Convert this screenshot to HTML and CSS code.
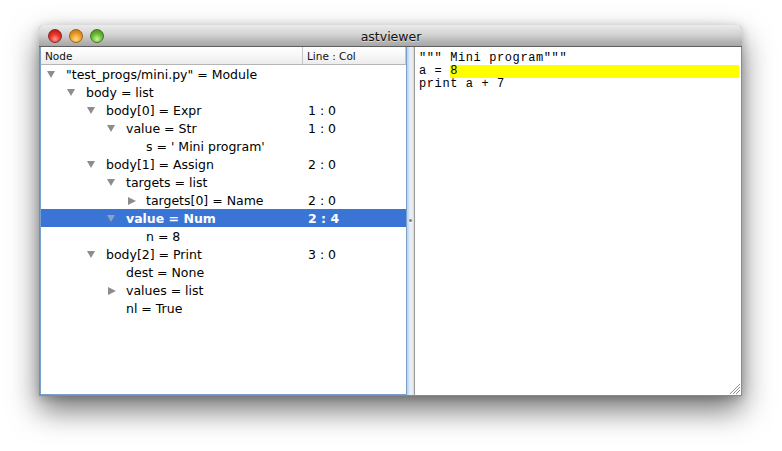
FILE: index.html
```html
<!DOCTYPE html>
<html>
<head>
<meta charset="utf-8">
<title>astviewer</title>
<link rel="stylesheet" href="styles.css">
</head>
<body>
<div class="desk">
  <div class="window">
    <div class="titlebar">
      <div class="lights">
        <span class="light red"></span>
        <span class="light orange"></span>
        <span class="light green"></span>
      </div>
      <div class="title">astviewer</div>
    </div>
    <div class="content">
      <div class="tree-pane">
        <div class="tree-header">
          <div class="hcell hnode">Node</div>
          <div class="hcell hline">Line : Col</div>
        </div>
        <div class="tree-body">
          <div class="row"><div class="node l0"><span class="tog"><i class="tri-down"></i></span><span class="label">"test_progs/mini.py" = Module</span></div><div class="pos"></div></div>
          <div class="row"><div class="node l1"><span class="tog"><i class="tri-down"></i></span><span class="label">body = list</span></div><div class="pos"></div></div>
          <div class="row"><div class="node l2"><span class="tog"><i class="tri-down"></i></span><span class="label">body[0] = Expr</span></div><div class="pos">1 : 0</div></div>
          <div class="row"><div class="node l3"><span class="tog"><i class="tri-down"></i></span><span class="label">value = Str</span></div><div class="pos">1 : 0</div></div>
          <div class="row"><div class="node l4"><span class="tog"></span><span class="label">s = ' Mini program'</span></div><div class="pos"></div></div>
          <div class="row"><div class="node l2"><span class="tog"><i class="tri-down"></i></span><span class="label">body[1] = Assign</span></div><div class="pos">2 : 0</div></div>
          <div class="row"><div class="node l3"><span class="tog"><i class="tri-down"></i></span><span class="label">targets = list</span></div><div class="pos"></div></div>
          <div class="row"><div class="node l4"><span class="tog"><i class="tri-right"></i></span><span class="label">targets[0] = Name</span></div><div class="pos">2 : 0</div></div>
          <div class="row selected"><div class="node l3"><span class="tog"><i class="tri-down"></i></span><span class="label">value = Num</span></div><div class="pos">2 : 4</div></div>
          <div class="row"><div class="node l4"><span class="tog"></span><span class="label">n = 8</span></div><div class="pos"></div></div>
          <div class="row"><div class="node l2"><span class="tog"><i class="tri-down"></i></span><span class="label">body[2] = Print</span></div><div class="pos">3 : 0</div></div>
          <div class="row"><div class="node l3"><span class="tog"></span><span class="label">dest = None</span></div><div class="pos"></div></div>
          <div class="row"><div class="node l3"><span class="tog"><i class="tri-right"></i></span><span class="label">values = list</span></div><div class="pos"></div></div>
          <div class="row"><div class="node l3"><span class="tog"></span><span class="label">nl = True</span></div><div class="pos"></div></div>
        </div>
      </div>
      <div class="splitter"><span class="grip"></span></div>
      <div class="code-pane">
        <div class="code-line">""" Mini program"""</div>
        <div class="code-line">a = <span class="hl">8</span></div>
        <div class="code-line">print a + 7</div>
      </div>
    </div>
    <svg class="resize-grip" width="11" height="11" viewBox="0 0 11 11">
      <line x1="1" y1="11" x2="11" y2="1" stroke="#8e8e8e" stroke-width="1"/>
      <line x1="2" y1="11" x2="11" y2="2" stroke="#ffffff" stroke-width="1"/>
      <line x1="4" y1="11" x2="11" y2="4" stroke="#8e8e8e" stroke-width="1"/>
      <line x1="5" y1="11" x2="11" y2="5" stroke="#ffffff" stroke-width="1"/>
      <line x1="7" y1="11" x2="11" y2="7" stroke="#8e8e8e" stroke-width="1"/>
      <line x1="8" y1="11" x2="11" y2="8" stroke="#ffffff" stroke-width="1"/>
    </svg>
  </div>
</div>
</body>
</html>
```

FILE: styles.css
```css
html, body {
  margin: 0;
  padding: 0;
  background: #ffffff;
}

.desk {
  width: 782px;
  height: 451px;
  box-sizing: border-box;
  padding: 25px 0 0 39px;
  font-family: "DejaVu Sans", "Liberation Sans", sans-serif;
}

.window {
  position: relative;
  width: 703px;
  height: 371px;
  box-sizing: border-box;
  border: 1px solid #8a8a8a;
  border-top: none;
  border-radius: 5px 5px 0 0;
  display: flex;
  flex-direction: column;
  background: #ffffff;
  box-shadow: 0 14px 30px rgba(0, 0, 0, 0.55), 0 2px 10px rgba(0, 0, 0, 0.2);
}

.titlebar {
  height: 21px;
  flex: none;
  border-bottom: 1px solid #5f5f5f;
  border-radius: 5px 5px 0 0;
  margin: 0 -1px;
  background: linear-gradient(#ebebeb, #d3d3d3 45%, #b4b4b4 80%, #a7a7a7);
  display: flex;
  align-items: center;
  position: relative;
}

.lights {
  display: flex;
  gap: 7px;
  padding-left: 9px;
}

.light {
  width: 14px;
  height: 14px;
  border-radius: 50%;
  box-sizing: border-box;
  display: block;
}

.red {
  background: radial-gradient(circle at 50% 75%, #ff9a8a 0%, #e8352b 45%, #a9120c 100%);
  border: 1px solid #8c2a22;
}

.orange {
  background: radial-gradient(circle at 50% 75%, #ffe08a 0%, #f0a02a 45%, #b86a0a 100%);
  border: 1px solid #9a6516;
}

.green {
  background: radial-gradient(circle at 50% 75%, #cdf59a 0%, #6fbe3a 45%, #3b7f14 100%);
  border: 1px solid #3f7a22;
}

.title {
  flex: 1;
  text-align: center;
  font-size: 12.5px;
  color: #111;
  text-shadow: 0 1px 0 rgba(255, 255, 255, 0.5);
  margin-left: -64px;
  padding-top: 1px;
}

.content {
  flex: 1;
  display: flex;
  min-height: 0;
}

.tree-pane {
  width: 367px;
  flex: none;
  box-sizing: border-box;
  border: 1px solid #7a9fcb;
  border-top: none;
  display: flex;
  flex-direction: column;
  font-size: 12.5px;
  color: #000;
}

.tree-header {
  height: 17px;
  flex: none;
  border-bottom: 1px solid #b5b5b5;
  background: linear-gradient(#ffffff, #f7f7f7 50%, #ececec);
  display: flex;
  font-size: 10.5px;
  color: #111;
}

.hcell {
  display: flex;
  align-items: center;
  box-sizing: border-box;
}

.hnode {
  width: 262px;
  padding-left: 4px;
  border-right: 1px solid #c6c6c6;
}

.hline {
  flex: 1;
  padding-left: 4px;
  border-right: 1px solid #c6c6c6;
}

.tree-body {
  flex: 1;
}

.row {
  height: 18px;
  display: flex;
  align-items: center;
  white-space: nowrap;
}

.row.selected {
  background: #3a75d6;
  color: #ffffff;
  font-weight: bold;
}

.node {
  width: 267px;
  box-sizing: border-box;
  display: flex;
  align-items: center;
}

.l0 { padding-left: 6px; }
.l1 { padding-left: 26px; }
.l2 { padding-left: 46px; }
.l3 { padding-left: 66px; }
.l4 { padding-left: 86px; }

.tog {
  width: 19px;
  flex: none;
  display: flex;
  align-items: center;
}

.tri-down {
  display: block;
  width: 0;
  height: 0;
  border-left: 4.5px solid transparent;
  border-right: 4.5px solid transparent;
  border-top: 7px solid #8c8c8c;
  margin-top: 1px;
}

.tri-right {
  display: block;
  width: 0;
  height: 0;
  border-top: 4.5px solid transparent;
  border-bottom: 4.5px solid transparent;
  border-left: 8px solid #8c8c8c;
  margin-left: 1px;
  margin-top: 1px;
}

.selected .tri-down {
  border-top-color: #8f9fbd;
}

.pos {
  flex: 1;
}

.splitter {
  width: 7px;
  flex: none;
  background: linear-gradient(to right, #b9cfe9, #dce8f5 35%, #eef3f9 60%, #d9d9d9);
  display: flex;
  align-items: center;
  justify-content: center;
}

.grip {
  width: 3px;
  height: 3px;
  border-radius: 50%;
  background: #7d7d7d;
  box-shadow: 0 1px 0 #ffffff;
  margin-top: -2px;
}

.code-pane {
  flex: 1;
  border-left: 1px solid #9a9a9a;
  padding: 5px 2px 0 4px;
  font-family: "Liberation Mono", "DejaVu Sans Mono", monospace;
  font-size: 12px;
  letter-spacing: 0.6px;
  line-height: 13px;
  color: #000;
}

.code-line {
  display: flex;
  white-space: pre;
  height: 13px;
}

.hl {
  flex: 1;
  background: #ffff00;
}

.resize-grip {
  position: absolute;
  right: 1px;
  bottom: 1px;
}
```
